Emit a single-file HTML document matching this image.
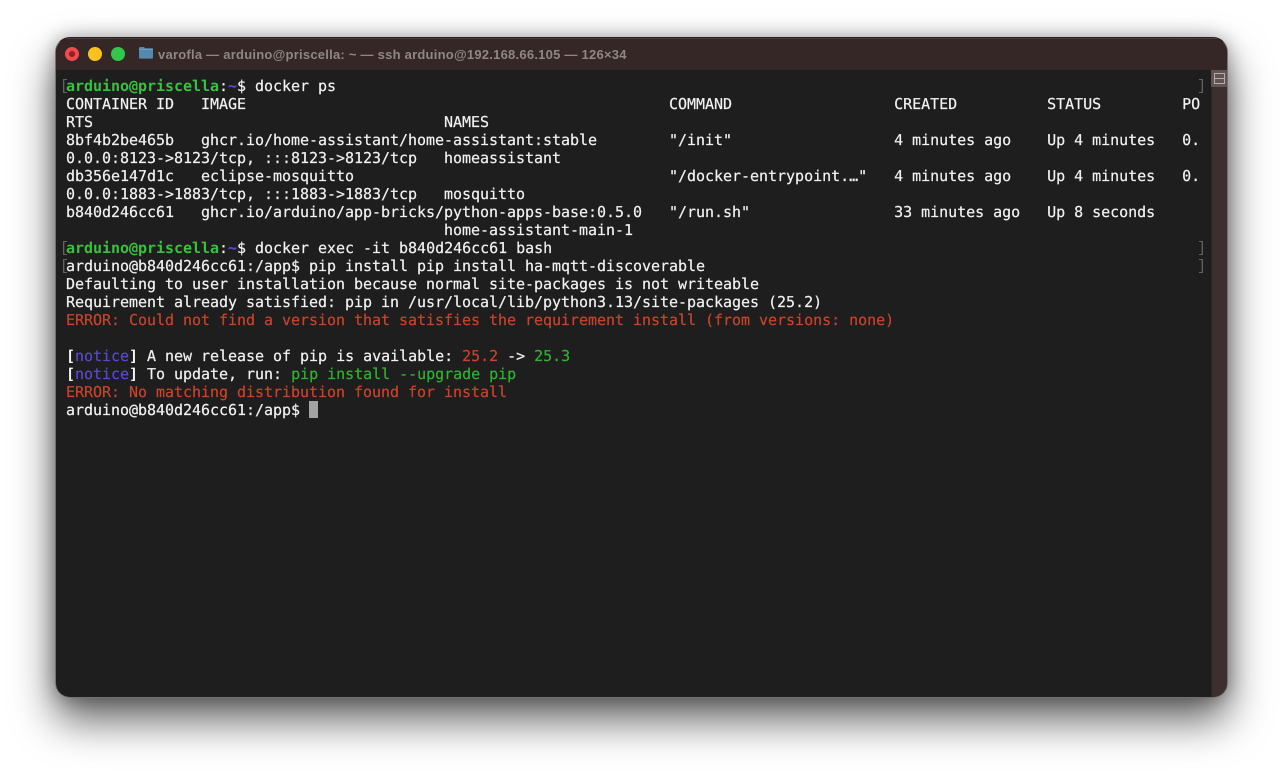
<!DOCTYPE html>
<html><head><meta charset="utf-8">
<style>
html,body{margin:0;padding:0;width:1283px;height:772px;overflow:hidden;background:#fff}
.win{position:absolute;left:55px;top:37px;width:1173px;height:661px;box-sizing:border-box;border-radius:15px;background:#1e1e1e;overflow:hidden;border:1px solid #77726f;border-top-color:#2a2322;border-top-width:1.5px}
.shadow{position:absolute;left:55px;top:37px;width:1173px;height:661px;border-radius:15px;box-shadow:0 22px 42px rgba(0,0,0,.62),0 0 18px rgba(0,0,0,.3)}
.bar{position:absolute;left:0;top:0;right:0;height:32px;background:#342726;box-shadow:inset 0 1px 0 #4a3f3d}
.sb{position:absolute;left:1155px;top:32px;width:17px;bottom:0;background:#3d2f2d;border-left:1px solid #2a2423;box-sizing:border-box}
.sbt{position:absolute;left:1155px;top:32px;width:17px;height:17px;background:#5f5452}
.sbt:after{content:"";position:absolute;left:3px;top:3px;width:9px;height:9px;border:1px solid #b3adab;background:linear-gradient(#b3adab,#b3adab) 0 3.5px/100% 1px no-repeat}
.dot{position:absolute;top:9px;width:14px;height:14px;border-radius:50%}
.title{position:absolute;left:102px;top:8px;font:bold 13px/17px "Liberation Sans",sans-serif;color:#8f8785;white-space:pre;letter-spacing:.24px}
pre{position:absolute;left:66px;top:77px;margin:0;font:15px/18px "DejaVu Sans Mono","Liberation Mono",monospace;letter-spacing:-.03px;text-rendering:geometricPrecision;color:#f2f2f2;font-weight:normal;-webkit-text-stroke:.2px currentColor}
.g{color:#39c23c;font-weight:bold;-webkit-text-stroke:0}
.b{color:#5a48d0}
.r{color:#c8442c}
.l{color:#2fb52f}
.k{font-weight:bold;-webkit-text-stroke:0}
.m{position:absolute;font:15px/18px "Liberation Mono",monospace;color:#66625f}
.cur{position:absolute;left:309px;top:401px;width:9px;height:17px;background:#a3a3a3}
</style></head><body>
<div class="shadow"></div>
<div class="win">
<div class="bar">
<div class="dot" style="left:9px;background:#f04a4f"><div style="position:absolute;left:4px;top:4px;width:6px;height:6px;border-radius:50%;background:#8f1f26"></div></div>
<div class="dot" style="left:32px;background:#fcc11d"></div>
<div class="dot" style="left:55px;background:#32c64a"></div>
<svg style="position:absolute;left:83px;top:8px" width="14" height="13" viewBox="0 0 14 13"><path d="M0 2.2Q0 1 1.2 1H5L6.2 2.2H13Q14 2.2 14 3.2V11.6Q14 12.6 13 12.6H1Q0 12.6 0 11.6Z" fill="#5488ad"/><path d="M0 3.4H14" stroke="#6f9fc0" stroke-width="1"/></svg>
<div class="title">varofla — arduino@priscella: ~ — ssh arduino@192.168.66.105 — 126×34</div>
</div>
<div class="sb"></div><div class="sbt"></div>
</div>
<pre><span class="g">arduino@priscella</span>:<span class="b" style="font-weight:bold">~</span>$ docker ps
CONTAINER ID   IMAGE                                               COMMAND                  CREATED          STATUS         PO
RTS                                       NAMES
8bf4b2be465b   ghcr.io/home-assistant/home-assistant:stable        "/init"                  4 minutes ago    Up 4 minutes   0.
0.0.0:8123-&gt;8123/tcp, :::8123-&gt;8123/tcp   homeassistant
db356e147d1c   eclipse-mosquitto                                   "/docker-entrypoint.…"   4 minutes ago    Up 4 minutes   0.
0.0.0:1883-&gt;1883/tcp, :::1883-&gt;1883/tcp   mosquitto
b840d246cc61   ghcr.io/arduino/app-bricks/python-apps-base:0.5.0   "/run.sh"                33 minutes ago   Up 8 seconds   
                                          home-assistant-main-1
<span class="g">arduino@priscella</span>:<span class="b" style="font-weight:bold">~</span>$ docker exec -it b840d246cc61 bash
arduino@b840d246cc61:/app$ pip install pip install ha-mqtt-discoverable
Defaulting to user installation because normal site-packages is not writeable
Requirement already satisfied: pip in /usr/local/lib/python3.13/site-packages (25.2)
<span class="r">ERROR: Could not find a version that satisfies the requirement install (from versions: none)</span>

<span class="k">[</span><span class="b">notice</span><span class="k">]</span> A new release of pip is available: <span class="r">25.2</span> -&gt; <span class="l">25.3</span>
<span class="k">[</span><span class="b">notice</span><span class="k">]</span> To update, run: <span class="l">pip install --upgrade pip</span>
<span class="r">ERROR: No matching distribution found for install</span>
arduino@b840d246cc61:/app$ </pre>
<div class="cur"></div>
<div class="m" style="left:60px;top:78px">[</div><div class="m" style="left:1197px;top:78px">]</div>
<div class="m" style="left:60px;top:240px">[</div><div class="m" style="left:1197px;top:240px">]</div>
<div class="m" style="left:60px;top:258px">[</div><div class="m" style="left:1197px;top:258px">]</div>
</body></html>
